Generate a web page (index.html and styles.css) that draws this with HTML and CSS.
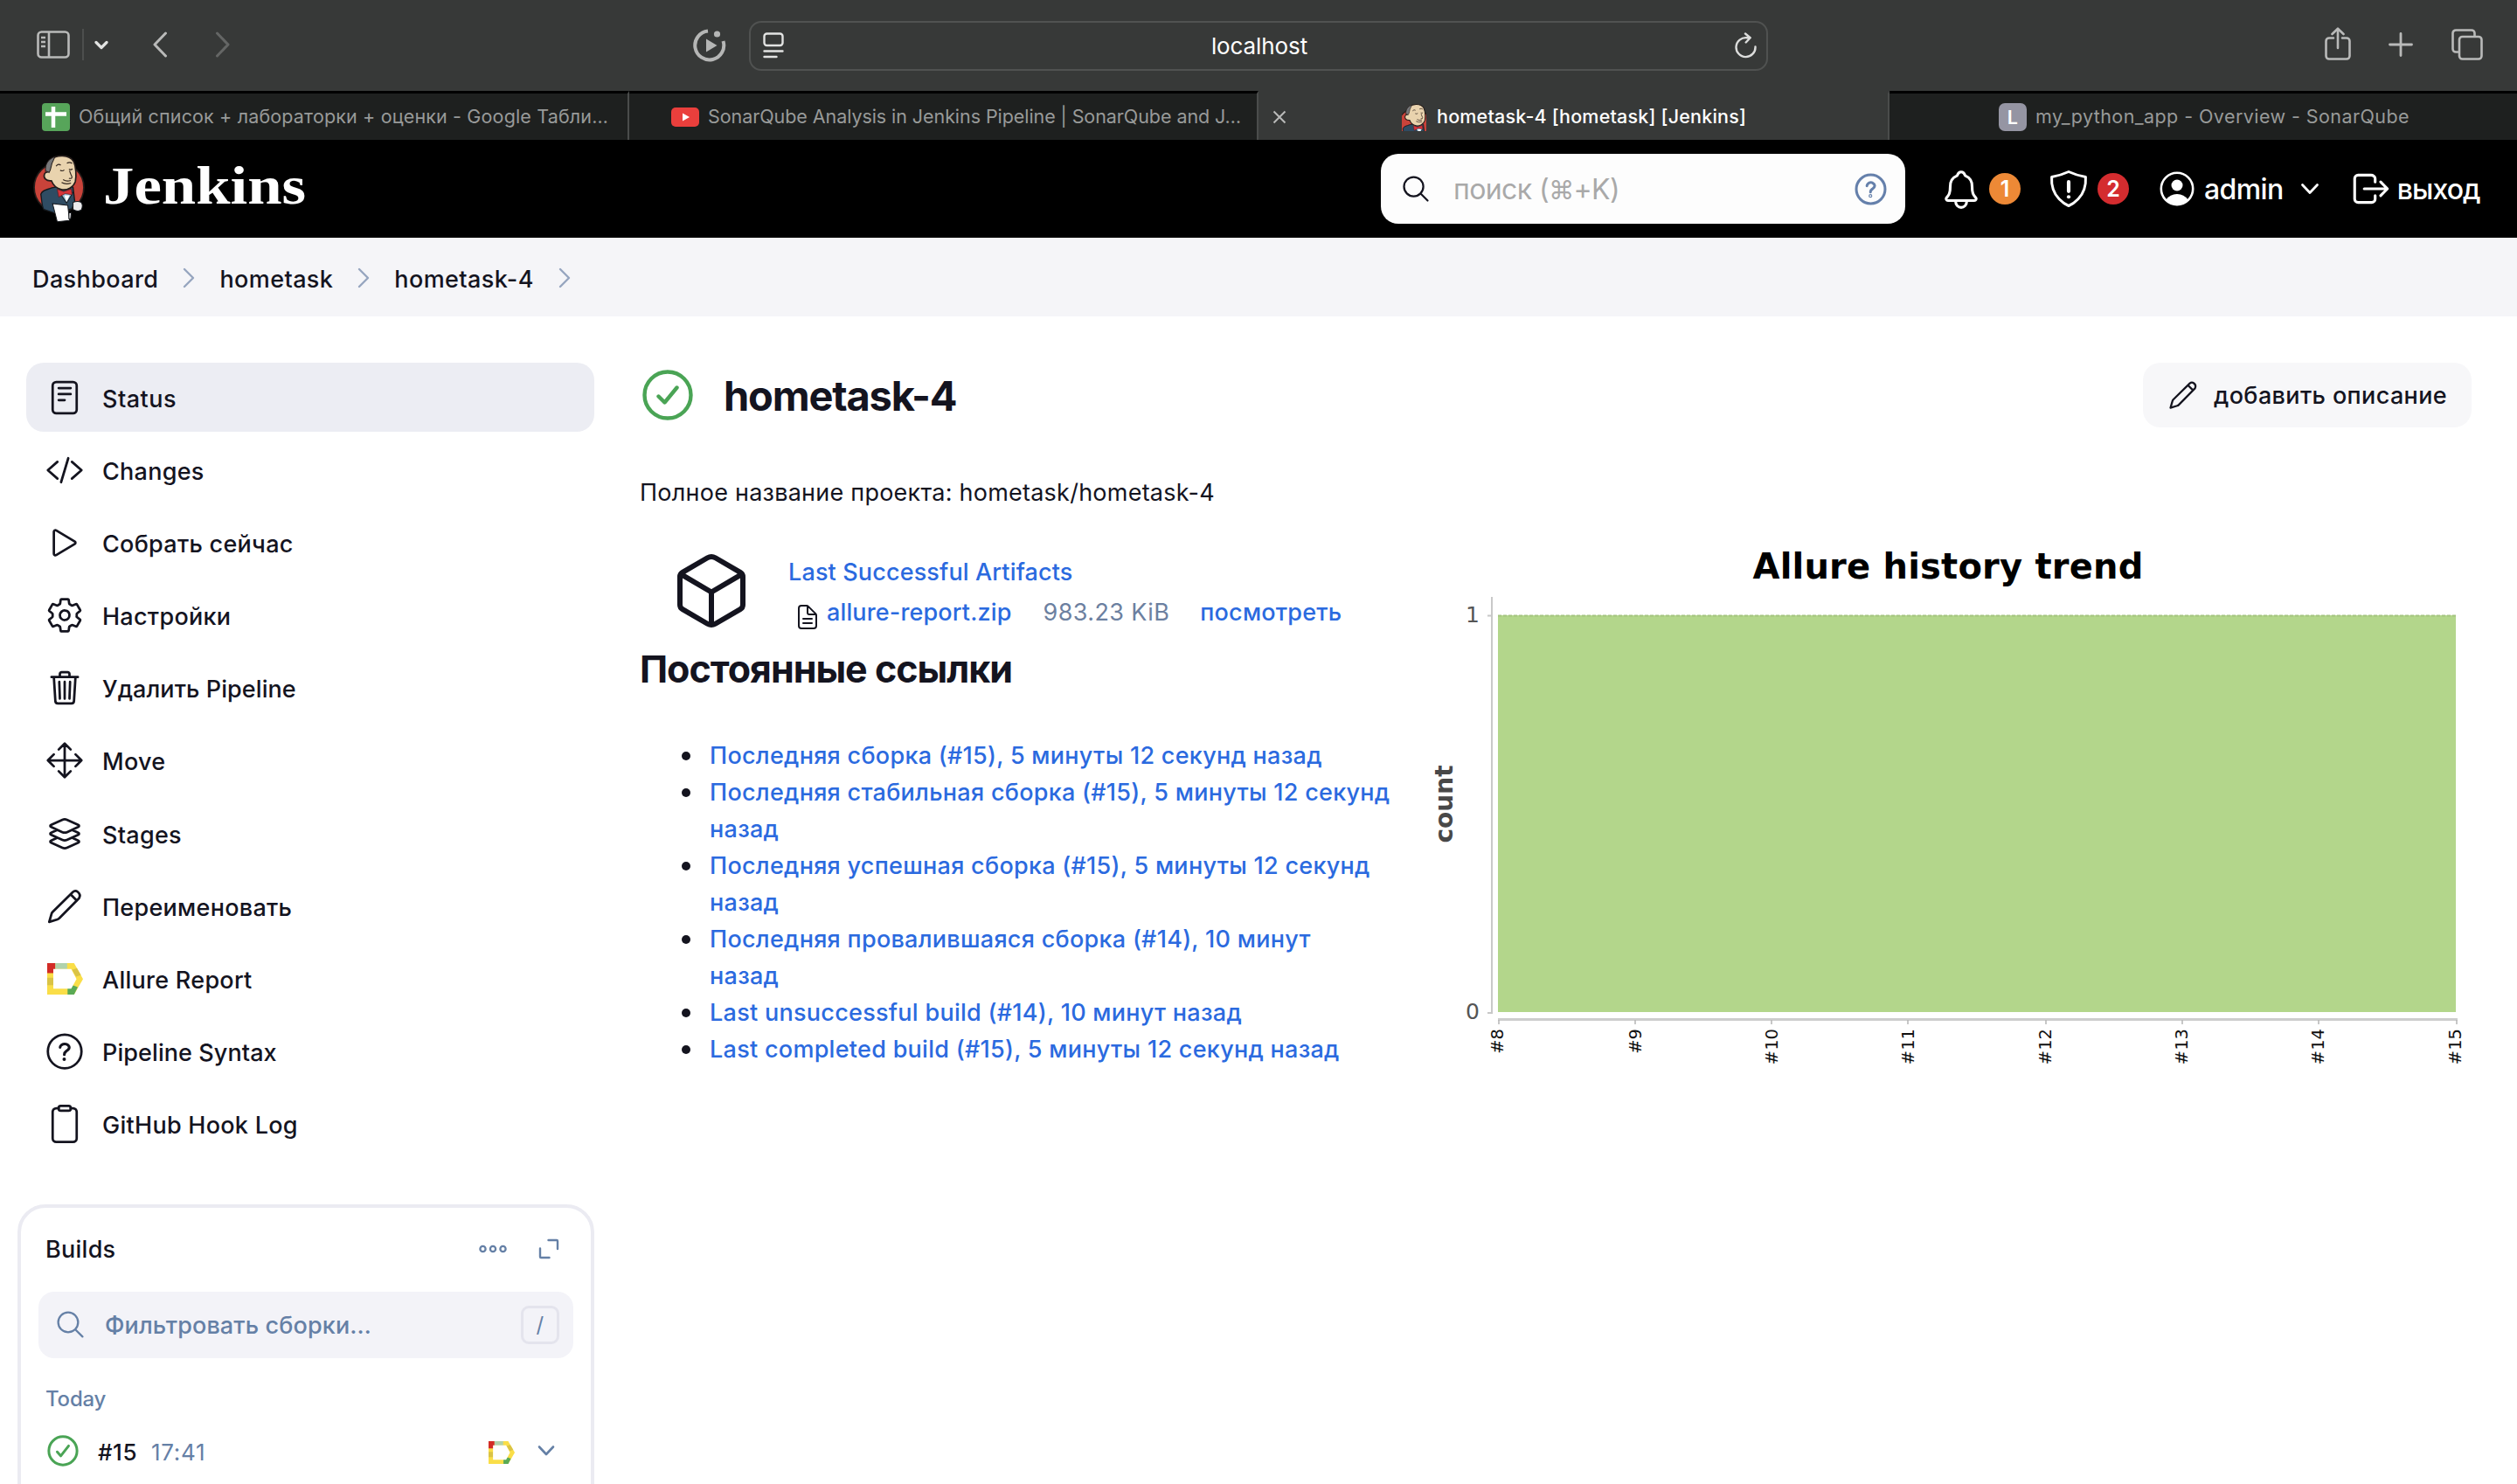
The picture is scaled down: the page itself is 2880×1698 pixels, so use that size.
FILE: index.html
```html
<!DOCTYPE html>
<html lang="ru">
<head>
<meta charset="utf-8">
<title>hometask-4 [hometask] [Jenkins]</title>
<link rel="stylesheet" href="styles.css">
</head>
<body>
<svg class="defs" width="0" height="0">
  <symbol id="allure" viewBox="0 0 88 107" preserveAspectRatio="none">
    <path fill="#fade48" d="M0 0h66l22 54-22 53H0z"/>
    <path fill="#d22c26" d="M0 0h20v34H0z"/><path fill="#b0d2ac" d="M20 0h29v20H20z"/>
    <path fill="#dac345" d="M0 50h15v25H0zM61 23l12-6 10 24-12 5z"/>
    <path fill="#5aaa55" d="M50 87l14-11 11 6-9 25H50z"/>
    <path fill="#fff" d="M15 20h44l13 34-13 33H15z"/>
  </symbol>
  <symbol id="pencil" viewBox="0 0 512 512">
    <path d="M50 464 82 354Q86 340 98 328L364 66Q396 38 430 64 474 98 448 148L186 414Q174 426 160 430ZM334 96l84 84"/>
  </symbol>
  <symbol id="butler" viewBox="22 24 176 236">
    <circle cx="110" cy="139" r="85" fill="#c9433a" stroke="#241c1a" stroke-width="5"/>
    <path fill="#2f4c63" stroke="#15181c" stroke-width="4" d="M86 140C66 148 52 148 48 162 52 190 52 206 58 214l36 12 60-14 10-24-6-50-20-8z"/>
    <path fill="#8fb6d2" stroke="#15181c" stroke-width="3" d="M112 156l24 36 22-36z"/>
    <path fill="#fff" d="M128 166l8 22 10-22z"/>
    <path fill="#e9d3ae" stroke="#241c1a" stroke-width="5" d="M84 44C100 26 146 26 160 50 168 68 170 98 166 118 160 138 138 150 118 146 98 142 88 126 84 116 66 118 56 106 60 94 64 84 70 88 72 86 70 70 74 54 84 44z"/>
    <path fill="#77787a" stroke="#241c1a" stroke-width="3" d="M96 34C72 42 62 62 64 84q6-2 12 4C84 78 82 60 90 48z"/>
    <path fill="none" stroke="#33261f" stroke-width="3.500" d="M100 66q8-10 16-3M137 56q10-6 18 1M114 80q8 5 14-1M144 76q8 5 12-1M146 82q4 12 8 20 2 8-10 6M124 112q12 8 26 3M119 122q14 8 32 2"/>
    <path fill="#d6333a" stroke="#5b171a" stroke-width="2" d="M104 145l22 8 26-9 3 20-24-4-22 12z"/>
    <path fill="#fff" stroke="#15181c" stroke-width="3" d="M88 194l52 6 6 52-42 4z"/>
    <path fill="#ececee" stroke="#15181c" stroke-width="3" d="M158 190q16-6 28 0 8 10 0 26-12 8-28-2zM144 226l8 0-2 20-6 0z"/>
  </symbol>
</svg>

<header class="toolbar">
  <svg width="38" height="32" viewBox="0 0 38 32"><g fill="none" stroke="#b9bab9" stroke-width="2.600"><rect x="1.500" y="1.500" width="35" height="29" rx="4"/><path d="M14 2v28M5 8h5M5 13h5M5 18h5"/></g></svg>
  <span class="tb-sep"></span>
  <svg class="tb-chev" width="16" height="12" viewBox="0 0 16 12"><path d="M2 2.500l6 6 6-6" fill="none" stroke="#e2e3e2" stroke-width="3.200" stroke-linecap="round" stroke-linejoin="round"/></svg>
  <svg class="tb-back" width="18" height="30" viewBox="0 0 18 30"><path d="M15.500 2L3 15l12.500 13" fill="none" stroke="#b9bab9" stroke-width="3" stroke-linecap="round" stroke-linejoin="round"/></svg>
  <svg class="tb-fwd" width="18" height="30" viewBox="0 0 18 30"><path d="M2.500 2L15 15 2.500 28" fill="none" stroke="#646665" stroke-width="3" stroke-linecap="round" stroke-linejoin="round"/></svg>
  <svg class="tb-play" width="38" height="38" viewBox="0 0 38 38"><path d="M17 2.500A16.500 16.500 0 1 0 34.500 14" fill="none" stroke="#b5b6b5" stroke-width="4"/><circle cx="27.500" cy="6" r="3.600" fill="#b5b6b5"/><path d="M15 11.500v15L27.500 19z" fill="#b5b6b5"/></svg>
  <div class="url">
    <svg width="24" height="30" viewBox="0 0 24 30"><g fill="none" stroke="#e2e3e2" stroke-width="2.400" stroke-linecap="round"><rect x="1.500" y="1.500" width="21" height="13.500" rx="3"/><path d="M1.500 21.500h21M1.500 28h14"/></g></svg>
    <span>localhost</span>
    <svg width="26" height="30" viewBox="0 0 26 30"><g fill="none" stroke="#dcdddc" stroke-width="2.400" stroke-linecap="round" stroke-linejoin="round"><path d="M23.500 16.500A11 11 0 1 1 14 6.200h3.500M12 1.500l5.700 4.700-5 5.300"/></g></svg>
  </div>
  <svg class="tb-share" width="32" height="38" viewBox="0 0 32 38"><g fill="none" stroke="#b9bab9" stroke-width="2.600" stroke-linecap="round" stroke-linejoin="round"><path d="M11 12.500H6a3.500 3.500 0 0 0-3.500 3.500v17A3.500 3.500 0 0 0 6 36.500h20a3.500 3.500 0 0 0 3.500-3.500V16a3.500 3.500 0 0 0-3.500-3.500h-5M16 24V2M9.500 8L16 1.700 22.500 8"/></g></svg>
  <svg class="tb-plus" width="28" height="28" viewBox="0 0 28 28"><path d="M14 1.500v25M1.500 14h25" stroke="#b9bab9" stroke-width="2.800" stroke-linecap="round"/></svg>
  <svg class="tb-tabs" width="36" height="36" viewBox="0 0 36 36"><g fill="none" stroke="#b9bab9" stroke-width="2.600"><path d="M9 26.500H5A3.500 3.500 0 0 1 1.500 23V5A3.500 3.500 0 0 1 5 1.500h18A3.500 3.500 0 0 1 26.500 5v4"/><rect x="9" y="9" width="25.500" height="25.500" rx="3.500"/></g></svg>
</header>

<nav class="tabs">
  <div class="tab t1"><svg width="32" height="32" viewBox="0 0 32 32"><rect width="32" height="32" rx="4" fill="#57a55a"/><path d="M13 4v24M4 12.500h24" stroke="#fff" stroke-width="4.500"/></svg><span>Общий список + лабораторки + оценки - Google Табли…</span></div>
  <div class="tab t2"><svg width="32" height="22" viewBox="0 0 32 22"><rect width="32" height="22" rx="5" fill="#ea3f3c"/><path d="M13 6.500v9l8-4.500z" fill="#fff"/></svg><span>SonarQube Analysis in Jenkins Pipeline | SonarQube and J…</span></div>
  <div class="tab t3"><svg class="x" width="16" height="16" viewBox="0 0 16 16"><path d="M1.500 1.500l13 13M14.500 1.500l-13 13" stroke="#b9bab9" stroke-width="2"/></svg><svg width="28" height="32" viewBox="42 24 132 151"><use href="#butler" x="22" y="24" width="176" height="236"/></svg><span>hometask-4 [hometask] [Jenkins]</span></div>
  <div class="tab t4"><b>L</b><span>my_python_app - Overview - SonarQube</span></div>
</nav>

<div class="head">
  <svg class="logo" viewBox="22 24 176 236"><use href="#butler" x="22" y="24" width="176" height="236"/></svg>
  <span class="brand">Jenkins</span>
  <div class="search">
    <svg class="ion" viewBox="0 0 512 512"><path d="M221.090 64a157.090 157.090 0 10157.090 157.090A157.100 157.100 0 00221.090 64zM338.290 338.290L448 448"/></svg>
    <span>поиск (<i>⌘</i>+K)</span>
    <svg class="help" viewBox="0 0 512 512"><circle cx="256" cy="256" r="228"/><path d="M196 202.290s.84-17.500 19.570-36.570C228.680 152.770 244 150.180 256 150c10.930-.14 22.690 1.670 30.530 6.450 12 6.760 33.470 18.380 33.470 45.090 0 28-21 39.810-40.370 52.800S252 281.430 252 300"/><circle cx="252" cy="362" r="8"/></svg>
  </div>
  <svg class="ion bell" viewBox="0 0 512 512"><path d="M427.680 351.430C402 320 383.870 304 383.870 217.350 383.870 138 343.350 109.730 310 96c-4.430-1.820-8.600-6-9.950-10.550C294.200 65.540 277.800 48 256 48s-38.210 17.550-44 37.470c-1.350 4.600-5.520 8.710-9.950 10.530-33.390 13.750-73.870 41.920-73.870 121.350C128.130 304 110 320 84.320 351.430 73.680 364.450 83 384 101.610 384h308.880c18.510 0 27.770-19.610 17.190-32.570zM320 384v16a64 64 0 01-128 0v-16"/></svg>
  <span class="badge orange">1</span>
  <svg class="ion shield" viewBox="0 0 512 512"><path d="M463.100 112.370C373.680 96.330 336.710 84.450 256 48c-80.710 36.450-117.680 48.330-207.100 64.370C32.700 369.130 240.580 457.790 256 464c15.420-6.210 223.300-94.870 207.100-351.630z"/><path stroke-width="44" d="M256 170v116"/><path stroke-width="44" d="M256 354v1"/></svg>
  <span class="badge red">2</span>
  <svg class="person" viewBox="0 0 40 40"><circle cx="20" cy="20" r="18.200" fill="none" stroke="#fff" stroke-width="2.600"/><circle cx="20" cy="16" r="6.500" fill="#fff"/><path fill="#fff" d="M7.500 32.500Q12 26 20 26t12.500 6.500Q27 38.500 20 38.500T7.500 32.500z"/></svg>
  <span class="who">admin</span>
  <svg class="hchev" width="22" height="14" viewBox="0 0 22 14"><path d="M2.500 2.500L11 11.500l8.500-9" fill="none" stroke="#fff" stroke-width="2.800" stroke-linecap="round" stroke-linejoin="round"/></svg>
  <svg class="ion out" viewBox="0 0 512 512"><path d="M304 336v40a40 40 0 01-40 40H104a40 40 0 01-40-40V136a40 40 0 0140-40h152c22.090 0 48 17.910 48 40v40M368 336l80-80-80-80M176 256h256"/></svg>
  <span class="who exit">выход</span>
</div>

<div class="crumbs">
  <span>Dashboard</span><svg viewBox="0 0 14 24"><path d="M2 2l10 10L2 22"/></svg>
  <span>hometask</span><svg viewBox="0 0 14 24"><path d="M2 2l10 10L2 22"/></svg>
  <span>hometask-4</span><svg viewBox="0 0 14 24"><path d="M2 2l10 10L2 22"/></svg>
</div>

<div class="page">
  <aside>
    <ul class="tasks">
      <li class="on"><svg class="ion" viewBox="0 0 512 512"><rect x="96" y="48" width="320" height="416" rx="48"/><path d="M176 128h160M176 208h160M176 288h80"/></svg><span>Status</span></li>
      <li><svg class="ion" viewBox="0 0 512 512"><path d="M160 368L32 256l128-112M352 368l128-112-128-112M304 96l-96 320"/></svg><span>Changes</span></li>
      <li><svg class="ion" viewBox="0 0 512 512"><path d="M112 111v290c0 17.440 17 28.520 31 20.160l247.900-148.370c12.120-7.250 12.120-26.330 0-33.580L143 90.840c-14-8.360-31 2.720-31 20.160z"/></svg><span>Собрать сейчас</span></li>
      <li><svg class="ion" viewBox="0 0 512 512"><path d="M262.290 192.310a64 64 0 1057.400 57.400 64.130 64.130 0 00-57.400-57.400zM416.390 256a154.340 154.340 0 01-1.530 20.790l45.210 35.460a10.810 10.810 0 012.450 13.750l-42.770 74a10.810 10.810 0 01-13.140 4.590l-44.900-18.080a16.110 16.110 0 00-15.170 1.750A164.480 164.480 0 01325 400.800a15.940 15.940 0 00-8.820 12.140l-6.730 47.890a11.080 11.080 0 01-10.680 9.170h-85.540a11.110 11.110 0 01-10.690-8.870l-6.720-47.820a16.070 16.070 0 00-9-12.220 155.300 155.300 0 01-21.460-12.570 16 16 0 00-15.110-1.710l-44.890 18.070a10.810 10.810 0 01-13.140-4.580l-42.770-74a10.800 10.800 0 012.450-13.750l38.210-30a16.050 16.050 0 006-14.080c-.36-4.170-.58-8.330-.58-12.500s.21-8.270.58-12.350a16 16 0 00-6.070-13.940l-38.190-30A10.810 10.810 0 0149.480 186l42.770-74a10.810 10.810 0 0113.140-4.590l44.900 18.080a16.110 16.110 0 0015.170-1.750A164.480 164.480 0 01187 111.200a15.940 15.940 0 008.820-12.140l6.730-47.890A11.080 11.080 0 01213.230 42h85.540a11.110 11.110 0 0110.690 8.870l6.720 47.820a16.070 16.070 0 009 12.220 155.300 155.300 0 0121.460 12.570 16 16 0 0015.110 1.710l44.890-18.070a10.810 10.810 0 0113.140 4.580l42.770 74a10.800 10.800 0 01-2.450 13.750l-38.210 30a16.050 16.050 0 00-6.050 14.080c.33 4.140.55 8.300.55 12.470z"/></svg><span>Настройки</span></li>
      <li><svg class="ion" viewBox="0 0 512 512"><path d="M112 112l20 320c.95 18.490 14.400 32 32 32h184c17.670 0 30.870-13.510 32-32l20-320M80 112h352M192 112V72a23.930 23.930 0 0124-24h80a23.930 23.930 0 0124 24v40M256 176v224M184 176l8 224M328 176l-8 224"/></svg><span class="tight">Удалить Pipeline</span></li>
      <li><svg class="ion" viewBox="0 0 512 512"><path d="M176 112l80-80 80 80M256 32v448M176 400l80 80 80-80M400 176l80 80-80 80M112 176l-80 80 80 80M32 256h448"/></svg><span>Move</span></li>
      <li><svg class="ion" viewBox="0 0 512 512"><path d="M434.800 137.650l-149.360-68.100c-16.190-7.400-42.690-7.400-58.880 0L77.300 137.650c-17.600 8-17.600 21.090 0 29.090l148 67.500c16.890 7.700 44.690 7.700 61.580 0l148-67.500c17.520-8 17.520-21.100-.08-29.090zM160 308.520l-82.700 37.110c-17.600 8-17.600 21.100 0 29.100l148 67.500c16.890 7.690 44.690 7.690 61.580 0l148-67.500c17.600-8 17.600-21.100 0-29.100l-79.940-38.470M160 204.480l-82.800 37.160c-17.600 8-17.600 21.100 0 29.100l148 67.490c16.890 7.700 44.690 7.700 61.580 0l148-67.490c17.700-8 17.700-21.100.1-29.100L352 204.480"/></svg><span>Stages</span></li>
      <li><svg class="ion" viewBox="0 0 512 512"><use href="#pencil"/></svg><span>Переименовать</span></li>
      <li><svg class="al"><use href="#allure" width="100%" height="100%"/></svg><span>Allure Report</span></li>
      <li><svg class="ion" viewBox="0 0 512 512"><circle cx="256" cy="256" r="224"/><path stroke-width="36" d="M195 202.290s.84-17.500 19.570-32.570C230.680 160.770 244 158.180 256 158c10.930-.14 20.690 1.670 26.530 4.450 10 4.760 34.470 16.380 34.470 41.090 0 26-22 37.810-41.370 50.800S251 281.430 251 300"/><path stroke-width="46" d="M250 360v1"/></svg><span class="tight">Pipeline Syntax</span></li>
      <li><svg class="ion" viewBox="0 0 512 512"><path d="M336 48h32a48 48 0 0148 48v352a48 48 0 01-48 48H144a48 48 0 01-48-48V96a48 48 0 0148-48h32"/><rect x="176" y="16" width="160" height="64" rx="26"/></svg><span>GitHub Hook Log</span></li>
    </ul>
    <section class="builds">
      <div class="bhead"><span>Builds</span>
        <svg width="32" height="12" viewBox="0 0 32 12"><g fill="none" stroke="#6580a6" stroke-width="2.300"><circle cx="4.500" cy="6" r="3.100"/><circle cx="16" cy="6" r="3.100"/><circle cx="27.500" cy="6" r="3.100"/></g></svg>
        <svg width="24" height="24" viewBox="0 0 24 24"><path d="M11.500 2H21a1 1 0 0 1 1 1v9M2 11.500V21a1 1 0 0 0 1 1h9.500" fill="none" stroke="#6580a6" stroke-width="2.400" stroke-linecap="round"/></svg></div>
      <div class="filter"><svg class="ion" viewBox="0 0 512 512"><path d="M221.090 64a157.090 157.090 0 10157.090 157.090A157.100 157.100 0 00221.090 64zM338.290 338.290L448 448"/></svg><span>Фильтровать сборки…</span><kbd>/</kbd></div>
      <div class="today">Today</div>
      <div class="build">
        <svg width="36" height="36" viewBox="0 0 58 58"><g fill="none" stroke="#4aa455" stroke-width="4.800" stroke-linecap="round" stroke-linejoin="round"><circle cx="29" cy="29" r="26"/><path d="M18.500 31l6.500 7.500L39.500 20"/></g></svg>
        <span class="num">#15</span><span class="time">17:41</span>
        <svg class="al2"><use href="#allure" width="100%" height="100%"/></svg>
        <svg width="20" height="14" viewBox="0 0 20 14"><path d="M2 2.500l8 8.500 8-8.500" fill="none" stroke="#6580a6" stroke-width="2.600" stroke-linecap="round" stroke-linejoin="round"/></svg>
      </div>
    </section>
  </aside>

  <main>
    <div class="title">
      <svg width="60" height="60" viewBox="-1 -1 60 60"><g fill="none" stroke="#4aa455" stroke-width="4.400" stroke-linecap="round" stroke-linejoin="round"><circle cx="29" cy="29" r="26.500"/><path d="M18.500 30.500l7 7L39.500 20.500"/></g></svg>
      <h1>hometask-4</h1>
      <button><svg class="ion" viewBox="0 0 512 512"><use href="#pencil"/></svg><span>добавить описание</span></button>
    </div>
    <p class="full">Полное название проекта: hometask/hometask-4</p>
    <div class="cols">
      <div class="left">
        <div class="art">
          <svg class="ion cube" viewBox="0 0 512 512"><path d="M448 341.370V170.610A32 32 0 00432.110 143l-152-88.460a47.940 47.940 0 00-48.240 0L79.890 143A32 32 0 0064 170.610v170.760A32 32 0 0079.890 369l152 88.460a48 48 0 0048.240 0l152-88.460A32 32 0 00448 341.370zM69 153.990l187 110 187-110M256 463.990v-200"/></svg>
          <div>
            <a>Last Successful Artifacts</a>
            <div class="file"><svg class="ion" viewBox="0 0 512 512"><path d="M416 221.250V416a48 48 0 01-48 48H144a48 48 0 01-48-48V96a48 48 0 0148-48h98.750a32 32 0 0122.620 9.370l141.260 141.260a32 32 0 019.370 22.620zM256 56v120a32 32 0 0032 32h120M176 288h160M176 368h160"/></svg><a class="f1">allure-report.zip</a><span class="f2">983.23 KiB</span><a class="f3">посмотреть</a></div>
          </div>
        </div>
        <h2>Постоянные ссылки</h2>
        <ul class="links">
          <li><a>Последняя сборка (#15), 5 минуты 12 секунд назад</a></li>
          <li><a>Последняя стабильная сборка (#15), 5 минуты 12 секунд<br>назад</a></li>
          <li><a>Последняя успешная сборка (#15), 5 минуты 12 секунд<br>назад</a></li>
          <li><a>Последняя провалившаяся сборка (#14), 10 минут<br>назад</a></li>
          <li><a>Last unsuccessful build (#14), 10 минут назад</a></li>
          <li><a>Last completed build (#15), 5 минуты 12 секунд назад</a></li>
        </ul>
      </div>
      <svg class="chart" width="1200" height="620" viewBox="1628 620 1200 620">
        <text x="2229" y="662" text-anchor="middle" class="ct">Allure history trend</text>
        <path fill="#b3d68b" d="M1714 704h1096v454H1714z"/>
        <path stroke="#a3c47f" stroke-width="2" stroke-dasharray="4 2" d="M1714 704.500h1096"/>
        <path stroke="#c8c8c8" stroke-width="2" d="M1707 683v477M1702 704.500h5M1702 1159h5"/>
        <path stroke="#cdcdcd" stroke-width="3" d="M1714 1166.500h1098"/>
        <path stroke="#b5b5b5" stroke-width="1.500" d="M1715 1167v5M1871 1167v5M2027 1167v5M2183 1167v5M2341 1167v5M2497 1167v5M2653 1167v5M2811 1167v5"/>
        <g class="cn"><text x="1677" y="712">1</text><text x="1677" y="1166">0</text></g>
        <text class="cy" transform="translate(1662 920) rotate(-90)" text-anchor="middle">count</text>
        <g class="cx" text-anchor="end">
          <text transform="translate(1720 1177) rotate(-90)">#8</text>
          <text transform="translate(1878 1177) rotate(-90)">#9</text>
          <text transform="translate(2034 1177) rotate(-90)">#10</text>
          <text transform="translate(2190 1177) rotate(-90)">#11</text>
          <text transform="translate(2347 1177) rotate(-90)">#12</text>
          <text transform="translate(2503 1177) rotate(-90)">#13</text>
          <text transform="translate(2659 1177) rotate(-90)">#14</text>
          <text transform="translate(2816 1177) rotate(-90)">#15</text>
        </g>
      </svg>
    </div>
  </main>
</div>
</body>
</html>
```
FILE: styles.css
```css
* { box-sizing: border-box; }
body { margin: 0; width: 2880px; height: 1698px; overflow: hidden; background: #fff; color: #14141f; font-family: Inter, "Liberation Sans", sans-serif; font-size: 27px; letter-spacing: .27px; display: flex; flex-direction: column; position: relative; }
svg { flex: none; display: block; }
.defs { position: absolute; }
span, a { white-space: nowrap; }
a { color: #2b6adf; font-weight: 450; }
ul { list-style: none; margin: 0; padding: 0; }
.ion { fill: none; stroke: currentColor; stroke-width: 32; stroke-linecap: round; stroke-linejoin: round; }

.toolbar { flex: none; height: 104px; background: #373938; display: flex; align-items: center; padding-left: 42px; padding-bottom: 2px; }
.tb-sep { width: 2px; height: 36px; margin-left: 14px; background: #4d4f4e; }
.tb-chev { margin-left: 12px; margin-top: 2px; }
.tb-back { margin-left: 50px; }
.tb-fwd { margin-left: 54px; }
.tb-play { margin-left: 529px; margin-top: 2px; }
.url { margin: 2px 0 0 26px; width: 1166px; height: 57px; border: 2px solid #505251; border-radius: 14px; display: flex; align-items: center; justify-content: space-between; padding: 0 10px 0 14px; color: #fff; font-size: 26px; letter-spacing: -.1px; }
.tb-share { margin-left: 636px; margin-top: -3px; }
.tb-plus { margin-left: 42px; }
.tb-tabs { margin-left: 44px; }

.tabs { flex: none; height: 56px; display: grid; grid-template-columns: 720px 720px 722px 718px; background: #1e201f; font-size: 21.500px; color: #989a99; }
.tab { display: flex; align-items: center; border-top: 3px solid #000; border-right: 2px solid #4a4c4b; }
.tab span { margin-top: -2px; }
.t1 { padding-left: 48px; gap: 10px; letter-spacing: .15px; }
.t2 { padding-left: 48px; gap: 10px; letter-spacing: -.07px; }
.t3 { background: #373938; border-top-color: #373938; color: #fff; font-weight: 500; padding-left: 16px; gap: 12px; letter-spacing: .2px; }
.x { margin-right: 120px; }
.t4 { padding-left: 125px; gap: 10px; border-right: 0; letter-spacing: .43px; }
.t4 b { width: 32px; height: 32px; border-radius: 7px; background: #9595a3; color: #fff; text-align: center; font-weight: 600; line-height: 33px; }

.head { flex: none; height: 112px; background: #000; color: #fff; display: flex; align-items: center; padding-left: 38px; }
.logo { width: 59px; height: 79px; margin-top: -2px; }
.brand { font: bold 61px/80px "Liberation Serif", serif; letter-spacing: 0; width: 240px; margin-left: 21px; transform: scaleX(1.16); transform-origin: 0 50%; margin-top: -6px; }
.search { margin-left: 1222px; width: 600px; height: 80px; border-radius: 20px; background: #fdfdfd; display: flex; align-items: center; padding: 0 21px 0 22px; color: #a9a9a9; font-size: 32px; letter-spacing: -.6px; }
.search span { margin: 0 auto 0 25px; }
.search i { font-style: normal; font-family: "DejaVu Sans", sans-serif; font-size: 29px; }
.search .ion { width: 36px; height: 36px; color: #14141f; }
.help { width: 37px; height: 37px; fill: none; stroke: #6580ab; stroke-width: 42; stroke-linecap: round; }
.bell { width: 50px; height: 50px; margin-left: 39px; margin-top: 2px; }
.badge { width: 36px; height: 36px; border-radius: 50%; text-align: center; font: 600 25px/37px Inter, sans-serif; letter-spacing: 0; }
.bell + .badge { margin-left: 7px; }
.orange { background: #ed8936; }
.red { background: #d42c2f; margin-left: 9px; }
.shield { width: 48px; height: 48px; margin-left: 31px; }
.person { width: 40px; height: 40px; margin-left: 35px; }
.who { font-size: 32px; font-weight: 500; margin-left: 11px; letter-spacing: -.6px; }
.hchev { margin-left: 19px; }
.out { width: 50px; height: 50px; margin-left: 34px; }
.exit { margin-left: 5px; letter-spacing: -.9px; }

.crumbs { flex: none; height: 90px; background: #f5f5f8; display: flex; align-items: center; padding: 4px 0 0 37px; font-weight: 500; letter-spacing: .4px; }
.crumbs svg { width: 14px; height: 24px; fill: none; stroke: #96a5bf; stroke-width: 2.400; stroke-linecap: round; stroke-linejoin: round; margin: -3px 28px 0; }

.page { flex: 1; display: flex; min-height: 0; padding-top: 53px; }
aside { width: 732px; flex: none; }
.tasks { margin-left: 30px; width: 650px; }
.tasks li { height: 79px; margin-bottom: 4.200px; border-radius: 20px; display: flex; align-items: center; padding-left: 22px; font-weight: 500; }
.tasks li svg { width: 44px; height: 44px; margin-right: 21px; }
.tasks li svg.al { width: 41px; height: 36px; margin: 0 22px 0 2px; }
.tasks span { margin-top: 3px; }
.tight { letter-spacing: .08px; }
.on { background: #ecedf3; letter-spacing: .5px; }
.builds { margin: 52px 0 0 20px; width: 660px; height: 400px; border: 4px solid #ebebf2; border-radius: 32px; padding: 0 20px; color: #6580a6; }
.bhead { display: flex; align-items: center; height: 96px; padding: 0 16px 2px 8px; font-weight: 500; gap: 36px; }
.bhead span { color: #14141f; margin-right: auto; margin-top: 2px; }
.filter { height: 76px; border-radius: 18px; background: #f3f3f8; display: flex; align-items: center; padding: 0 16px 0 18px; letter-spacing: .12px; }
.filter svg { width: 37px; height: 37px; }
.filter span { margin: 2px auto 0 21px; font-weight: 450; }
kbd { width: 44px; height: 44px; border: 3px solid #e4e4ed; border-radius: 9px; text-align: center; font: 24px/38px Inter, sans-serif; }
.today { font-size: 24px; line-height: 40px; margin: 27px 0 0 8px; font-weight: 450; letter-spacing: -.2px; }
.build { display: flex; align-items: center; height: 60px; margin-top: 9px; padding: 0 21px 0 10px; font-size: 26px; }
.build .num { color: #14141f; font-weight: 500; margin-left: 22px; padding-top: 3px; letter-spacing: .5px; }
.time { margin: 3px auto 0 16px; letter-spacing: .7px; }
.al2 { width: 30px; height: 26px; margin-right: 26px; margin-top: 5px; }

main { flex: 1; }
.title { display: flex; align-items: center; height: 74px; padding-left: 2px; }
h1 { margin: 0 auto 0 34px; font-size: 47px; font-weight: 700; line-height: 60px; padding-top: 2px; letter-spacing: -1.200px; }
button { margin-right: 52px; width: 376px; height: 74px; border: 0; border-radius: 20px; background: #f7f7f9; color: #14141f; font: 500 27px/40px Inter, sans-serif; letter-spacing: .37px; display: flex; align-items: center; padding: 2px 0 0 28px; }
button .ion { width: 36px; height: 36px; margin: -2px 17px 0 0; }
.full { margin: 55px 0 36px; line-height: 40px; letter-spacing: .24px; }
.cols { display: flex; }
.left { width: 896px; flex: none; }
.art { display: flex; padding: 8px 0 0 34px; line-height: 46px; }
.cube { width: 96px; height: 96px; margin-right: 40px; }
.art > div { padding-top: 4px; }
.art a { display: block; letter-spacing: .14px; }
.file { display: flex; padding-left: 6px; }
.file .ion { width: 32px; height: 32px; margin-top: 12px; }
.art .f1 { margin-left: 6px; }
.f2 { margin-left: 36px; color: #6c80a0; letter-spacing: .4px; }
.art .f3 { margin-left: 35px; letter-spacing: .2px; }
h2 { margin: 11px 0 49px; font-size: 43px; font-weight: 650; line-height: 60px; letter-spacing: -1px; }
.links { line-height: 42px; padding-left: 80px; letter-spacing: .28px; }
.links li::before { content: ""; float: left; width: 10px; height: 10px; border-radius: 50%; background: #14141f; margin: 16px 0 0 -32px; }
.chart { letter-spacing: 0; }
.chart text { font-family: "DejaVu Sans", sans-serif; }
.chart .ct { font-size: 40px; font-weight: bold; letter-spacing: .2px; }
.chart .cn { font-size: 25px; fill: #555; }
.chart .cy { font-size: 28px; font-weight: bold; fill: #484848; }
.chart .cx { font-size: 19.500px; fill: #111; }
```
